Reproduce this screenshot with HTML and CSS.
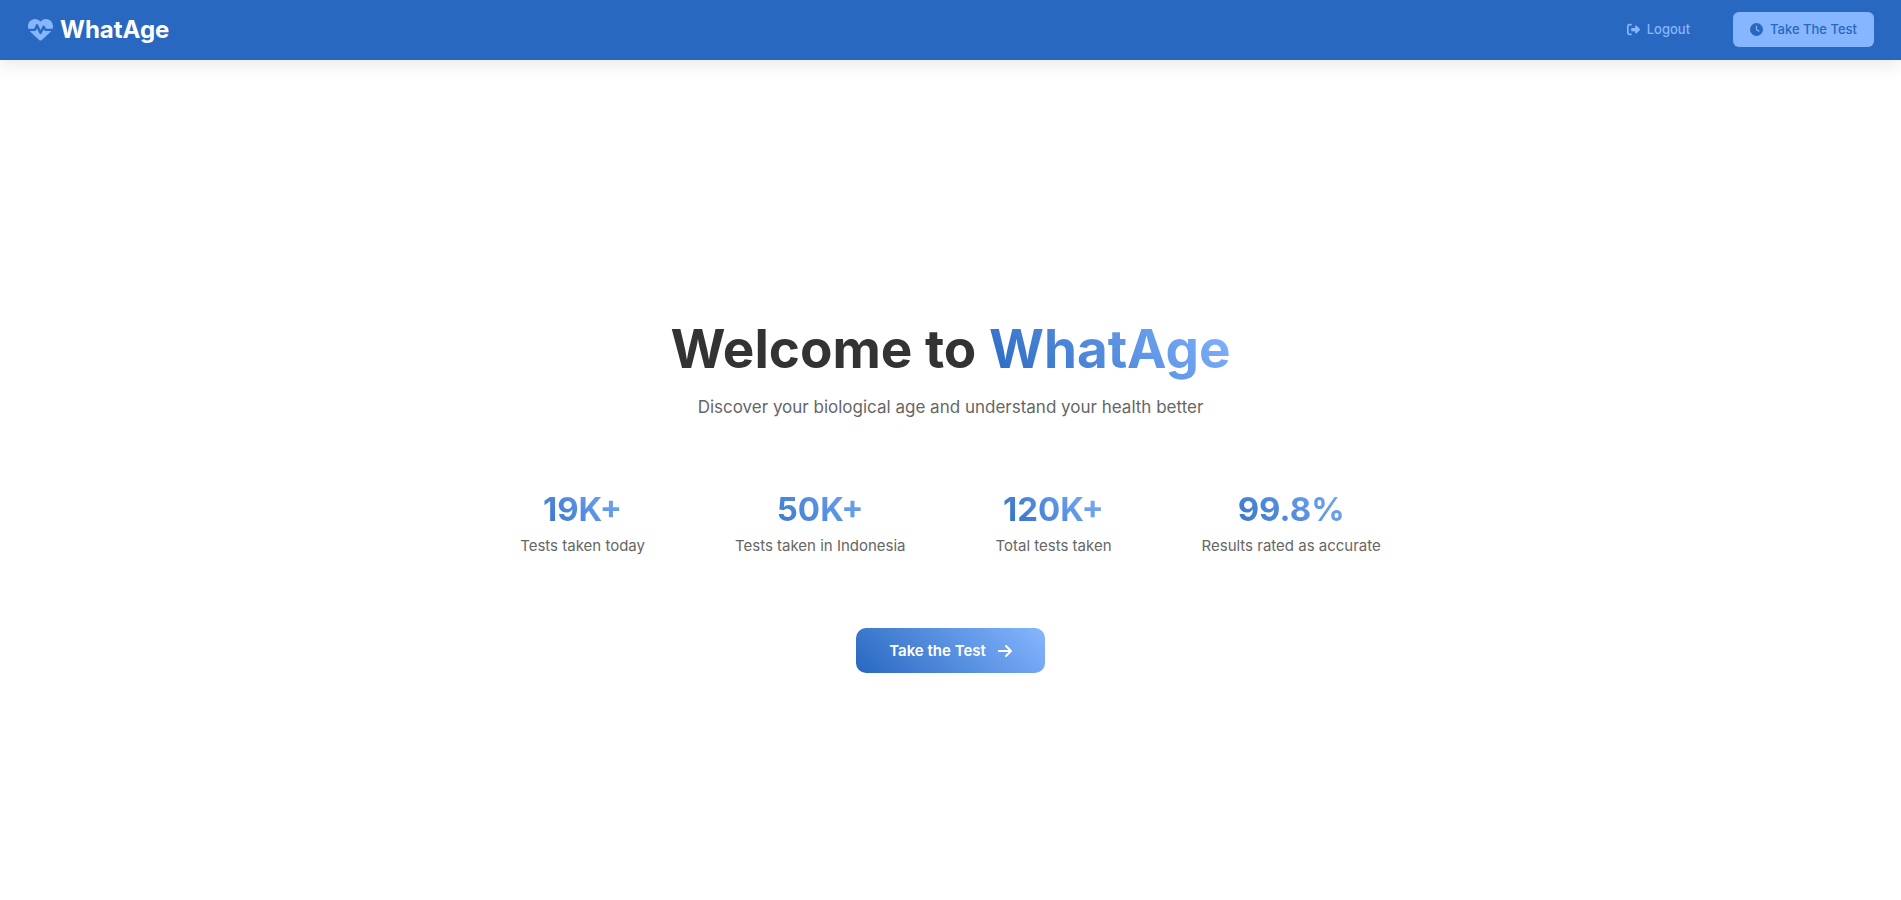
FILE: index.html
```html
<!DOCTYPE html>
<html lang="en">
<head>
<meta charset="utf-8">
<meta name="viewport" content="width=device-width, initial-scale=1">
<title>WhatAge</title>
<link rel="stylesheet" href="styles.css">
</head>
<body>
<header class="navbar">
  <a class="brand" href="#">
    <svg class="brand-icon" viewBox="0 0 512 512" aria-hidden="true"><path d="M228.3 469.1L47.6 300.4c-4.2-3.9-8.2-8.1-11.9-12.4h87c22.6 0 43-13.6 51.7-34.5l10.5-25.2 49.3 109.5c3.8 8.5 12.1 14 21.4 14.1s17.8-5 22-13.3L320 253.7l1.7 3.4c9.5 19 28.9 31 50.1 31H476.3c-3.7 4.3-7.7 8.5-11.9 12.4L283.7 469.1c-7.5 7-17.4 10.9-27.7 10.9s-20.2-3.9-27.7-10.9zM503.7 240h-132c-3 0-5.8-1.7-7.2-4.4l-23.2-46.3c-4.1-8.1-12.4-13.3-21.5-13.3s-17.4 5.1-21.5 13.3l-41.4 82.8L205.9 158.2c-3.9-8.7-12.7-14.3-22.2-14.1s-18.1 5.9-21.8 14.8l-31.8 76.3c-1.2 3-4.2 4.9-7.4 4.9H16c-2.6 0-5 .4-7.3 1.1C3 225.2 0 208.2 0 190.9v-5.8c0-69.9 50.5-129.5 119.4-141C165 36.5 211.4 51.4 244 84l12 12 12-12c32.6-32.6 79-47.5 124.6-39.9C461.5 55.6 512 115.2 512 185.1v5.8c0 16.9-2.8 33.5-8.3 49.1z"/></svg>
    <span>WhatAge</span>
  </a>
  <nav class="nav-actions">
    <a class="nav-link" href="#">
      <svg class="nav-icon" viewBox="0 0 512 512" aria-hidden="true"><path d="M377.9 105.9L500.7 228.7c7.2 7.2 11.3 17.1 11.3 27.3s-4.1 20.1-11.3 27.3L377.9 406.1c-6.4 6.4-15 9.9-24 9.9c-18.7 0-33.9-15.2-33.9-33.9l0-62.1-128 0c-17.7 0-32-14.3-32-32l0-64c0-17.7 14.3-32 32-32l128 0 0-62.1c0-18.7 15.2-33.9 33.9-33.9c9 0 17.6 3.6 24 9.9zM160 96L96 96c-17.7 0-32 14.3-32 32l0 256c0 17.7 14.3 32 32 32l64 0c17.7 0 32 14.3 32 32s-14.3 32-32 32l-64 0c-53 0-96-43-96-96L0 128C0 75 43 32 96 32l64 0c17.7 0 32 14.3 32 32s-14.3 32-32 32z"/></svg>
      <span>Logout</span>
    </a>
    <a class="nav-link nav-link-filled" href="#">
      <svg class="nav-icon" viewBox="0 0 512 512" aria-hidden="true"><path d="M256 0a256 256 0 1 1 0 512A256 256 0 1 1 256 0zM232 120l0 136c0 8 4 15.5 10.7 20l96 64c11 7.4 25.9 4.4 33.3-6.7s4.4-25.9-6.7-33.3L280 243.2 280 120c0-13.3-10.7-24-24-24s-24 10.7-24 24z"/></svg>
      <span>Take The Test</span>
    </a>
  </nav>
</header>
<main class="hero">
  <h1 class="hero-title">Welcome to <span class="gradient-text">WhatAge</span></h1>
  <p class="hero-subtitle">Discover your biological age and understand your health better</p>
  <div class="stats">
    <div class="stat">
      <div class="stat-number gradient-text">19K+</div>
      <div class="stat-label">Tests taken today</div>
    </div>
    <div class="stat">
      <div class="stat-number gradient-text">50K+</div>
      <div class="stat-label">Tests taken in Indonesia</div>
    </div>
    <div class="stat">
      <div class="stat-number gradient-text">120K+</div>
      <div class="stat-label">Total tests taken</div>
    </div>
    <div class="stat">
      <div class="stat-number gradient-text">99.8%</div>
      <div class="stat-label">Results rated as accurate</div>
    </div>
  </div>
  <button class="cta" type="button">
    <span>Take the Test</span>
    <svg class="cta-icon" viewBox="0 0 448 512" aria-hidden="true"><path d="M438.6 278.6c12.5-12.5 12.5-32.8 0-45.3l-160-160c-12.5-12.5-32.8-12.5-45.3 0s-12.5 32.8 0 45.3L338.8 224 32 224c-17.7 0-32 14.3-32 32s14.3 32 32 32l306.7 0L233.4 393.4c-12.5 12.5-12.5 32.8 0 45.3s32.8 12.5 45.3 0l160-160z"/></svg>
  </button>
</main>
</body>
</html>
```
FILE: styles.css
```css
:root {
  --primary: #2868c0;
  --accent: #86b6ff;
  --text: #333;
  --muted: #666;
}

* {
  box-sizing: border-box;
}

body {
  margin: 0;
  min-height: 100vh;
  display: flex;
  flex-direction: column;
  background: #fff;
  color: var(--text);
  font-family: Inter, "Liberation Sans", sans-serif;
}

svg {
  fill: currentColor;
  flex: none;
}

.navbar {
  display: flex;
  align-items: center;
  justify-content: space-between;
  padding: 12px 27px 13px 28px;
  background: var(--primary);
  box-shadow: 0 4px 20px rgba(0, 0, 0, 0.1);
}

.brand {
  display: flex;
  align-items: center;
  gap: 7px;
  color: #fff;
  font-size: 24px;
  font-weight: 700;
  line-height: 29px;
  text-decoration: none;
}

.brand-icon {
  width: 25px;
  height: 25px;
  color: var(--accent);
}

.nav-actions {
  display: flex;
  align-items: center;
  gap: 26px;
}

.nav-link {
  display: flex;
  align-items: center;
  gap: 7px;
  padding: 9px 17px;
  border-radius: 6px;
  color: var(--accent);
  font-size: 13px;
  font-weight: 500;
  line-height: 17px;
  text-decoration: none;
}

.nav-link-filled {
  background: var(--accent);
  color: var(--primary);
}

.nav-icon {
  width: 13px;
  height: 13px;
}

.hero {
  flex: 1;
  display: flex;
  flex-direction: column;
  align-items: center;
  justify-content: center;
  padding: 30px 32px 0;
  text-align: center;
}

.gradient-text {
  background: linear-gradient(45deg, var(--primary), var(--accent));
  -webkit-background-clip: text;
  background-clip: text;
  color: transparent;
}

.hero-title {
  margin: 0 0 12px;
  font-size: 53px;
  font-weight: 700;
  line-height: 65px;
}

.hero-subtitle {
  margin: 0 0 68px;
  color: var(--muted);
  font-size: 17px;
  line-height: 27px;
}

.stats {
  display: flex;
  flex-wrap: wrap;
  justify-content: center;
  gap: 32px 90px;
  margin-bottom: 71px;
}

.stat-number {
  margin-bottom: 4px;
  font-size: 33px;
  font-weight: 700;
  line-height: 41px;
}

.stat-label {
  color: var(--muted);
  font-size: 15px;
  line-height: 23px;
}

.cta {
  display: flex;
  align-items: center;
  gap: 12px;
  padding: 14px 33px;
  border: 0;
  border-radius: 10px;
  background: linear-gradient(45deg, var(--primary), var(--accent));
  color: #fff;
  font-family: inherit;
  font-size: 15px;
  font-weight: 600;
  line-height: 17px;
  cursor: pointer;
}

.cta-icon {
  width: 14px;
  height: 16px;
}
```
